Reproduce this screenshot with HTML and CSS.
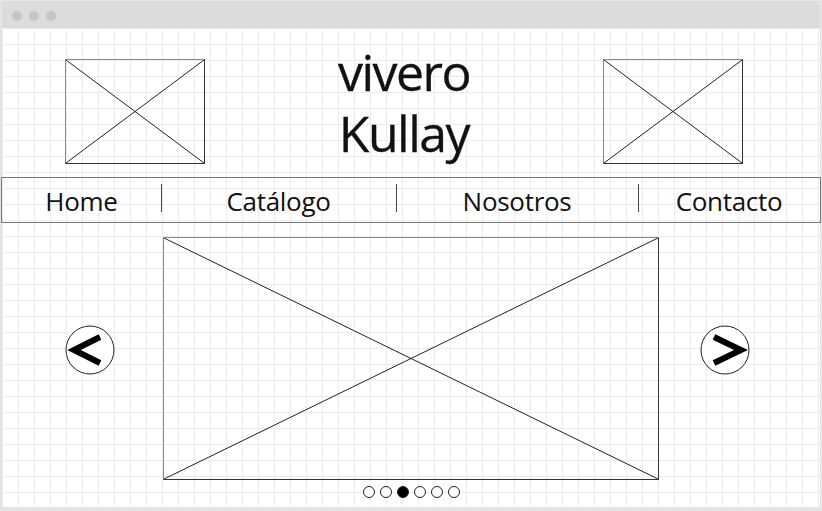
FILE: index.html
```html
<!DOCTYPE html>
<html lang="es">
<head>
  <meta charset="UTF-8">
  <meta name="viewport" content="width=device-width, initial-scale=1.0">
  <title>vivero Kullay</title>
  <link rel="stylesheet" href="styles.css">
</head>
<body>
  <div class="window">
    <div class="titlebar">
      <span class="dot"></span>
      <span class="dot"></span>
      <span class="dot"></span>
    </div>

    <div class="canvas">
      <div class="header">
        <div class="placeholder logo-box">
          <svg viewBox="0 0 100 100" preserveAspectRatio="none">
            <line x1="0" y1="0" x2="100" y2="100" vector-effect="non-scaling-stroke"/>
            <line x1="100" y1="0" x2="0" y2="100" vector-effect="non-scaling-stroke"/>
          </svg>
        </div>
        <h1 class="brand">vivero<br>Kullay</h1>
        <div class="placeholder logo-box">
          <svg viewBox="0 0 100 100" preserveAspectRatio="none">
            <line x1="0" y1="0" x2="100" y2="100" vector-effect="non-scaling-stroke"/>
            <line x1="100" y1="0" x2="0" y2="100" vector-effect="non-scaling-stroke"/>
          </svg>
        </div>
      </div>

      <nav class="nav">
        <a class="nav-item">Home</a>
        <a class="nav-item">Catálogo</a>
        <a class="nav-item">Nosotros</a>
        <a class="nav-item">Contacto</a>
      </nav>

      <div class="carousel">
        <button class="arrow">
          <svg viewBox="0 0 50 50">
            <circle cx="25" cy="25" r="24"/>
            <polyline class="chev" points="35,12 9,25 35,38"/>
          </svg>
        </button>
        <div class="slide-wrap">
          <div class="placeholder slide">
            <svg viewBox="0 0 100 100" preserveAspectRatio="none">
              <line x1="0" y1="0" x2="100" y2="100" vector-effect="non-scaling-stroke"/>
              <line x1="100" y1="0" x2="0" y2="100" vector-effect="non-scaling-stroke"/>
            </svg>
          </div>
          <div class="pager">
            <span class="pip"></span>
            <span class="pip"></span>
            <span class="pip active"></span>
            <span class="pip"></span>
            <span class="pip"></span>
            <span class="pip"></span>
          </div>
        </div>
        <button class="arrow">
          <svg viewBox="0 0 50 50">
            <circle cx="25" cy="25" r="24"/>
            <polyline class="chev" points="14,12 41,25 14,38"/>
          </svg>
        </button>
      </div>
    </div>
  </div>
</body>
</html>
```

FILE: styles.css
```css
* {
  margin: 0;
  padding: 0;
  box-sizing: border-box;
}

body {
  width: 822px;
  height: 511px;
  font-family: "Open Sans", "Noto Sans", sans-serif;
  color: #111;
  background: #fff;
  overflow: hidden;
}

.window {
  width: 822px;
  height: 511px;
  border-left: 2px solid #e4e4e4;
  border-right: 2px solid #e4e4e4;
  border-bottom: 4px solid #e4e4e4;
  display: flex;
  flex-direction: column;
}

.titlebar {
  height: 28px;
  background: #dcdcdc;
  display: flex;
  align-items: center;
  gap: 7px;
  padding-left: 10px;
  padding-top: 2px;
  border-top: 1px solid #e8e8e8;
}

.dot {
  width: 10px;
  height: 10px;
  border-radius: 50%;
  background: #c6c6c6;
}

.canvas {
  flex: 1;
  background-color: #fff;
  background-image:
    linear-gradient(to right, #ececec 1px, transparent 1px),
    linear-gradient(to bottom, #ececec 1px, transparent 1px);
  background-size: 16px 16px;
  background-position: 0 0;
  display: flex;
  flex-direction: column;
}

.placeholder {
  border: 1px solid #333;
  border-top-color: #888;
  border-left-color: #888;
  background: transparent;
}

.placeholder svg {
  display: block;
  width: 100%;
  height: 100%;
}

.placeholder line {
  stroke: #222;
  stroke-width: 1;
}

.header {
  height: 149px;
  display: flex;
  align-items: flex-start;
  padding-top: 31px;
  padding-left: 63px;
}

.logo-box {
  width: 140px;
  height: 105px;
}

.brand {
  width: 398px;
  text-align: center;
  font-weight: 400;
  font-size: 50px;
  line-height: 61px;
  letter-spacing: -1.5px;
  margin-top: -17px;
  -webkit-text-stroke: 0.3px #111;
}

.nav {
  height: 46px;
  border: 1px solid #777;
  margin-left: -1px;
  margin-right: -1px;
  display: grid;
  grid-template-columns: 159px 235px 242px 1fr;
  align-items: center;
}

.nav-item {
  position: relative;
  font-size: 26px;
  text-align: center;
  line-height: 30px;
  letter-spacing: -0.3px;
  padding-top: 2px;
}

.nav-item + .nav-item::before {
  content: "";
  position: absolute;
  left: 0;
  top: 0;
  height: 28px;
  border-left: 1px solid #444;
}

.carousel {
  display: flex;
  align-items: flex-start;
  padding-top: 14px;
  padding-left: 63px;
}

.arrow {
  width: 50px;
  height: 50px;
  border: none;
  background: transparent;
  margin-top: 88px;
}

.arrow svg {
  display: block;
  width: 50px;
  height: 50px;
}

.arrow circle {
  fill: #fff;
  stroke: #222;
  stroke-width: 1;
}

.arrow .chev {
  fill: none;
  stroke: #000;
  stroke-width: 6;
  stroke-linejoin: miter;
}

.slide-wrap {
  margin-left: 48px;
  margin-right: 41px;
  display: flex;
  flex-direction: column;
  align-items: center;
}

.slide {
  width: 496px;
  height: 243px;
}

.pager {
  display: flex;
  gap: 5px;
  margin-top: 6px;
}

.pip {
  width: 12px;
  height: 12px;
  border-radius: 50%;
  border: 1px solid #222;
  background: #fff;
}

.pip.active {
  background: #000;
}
```
